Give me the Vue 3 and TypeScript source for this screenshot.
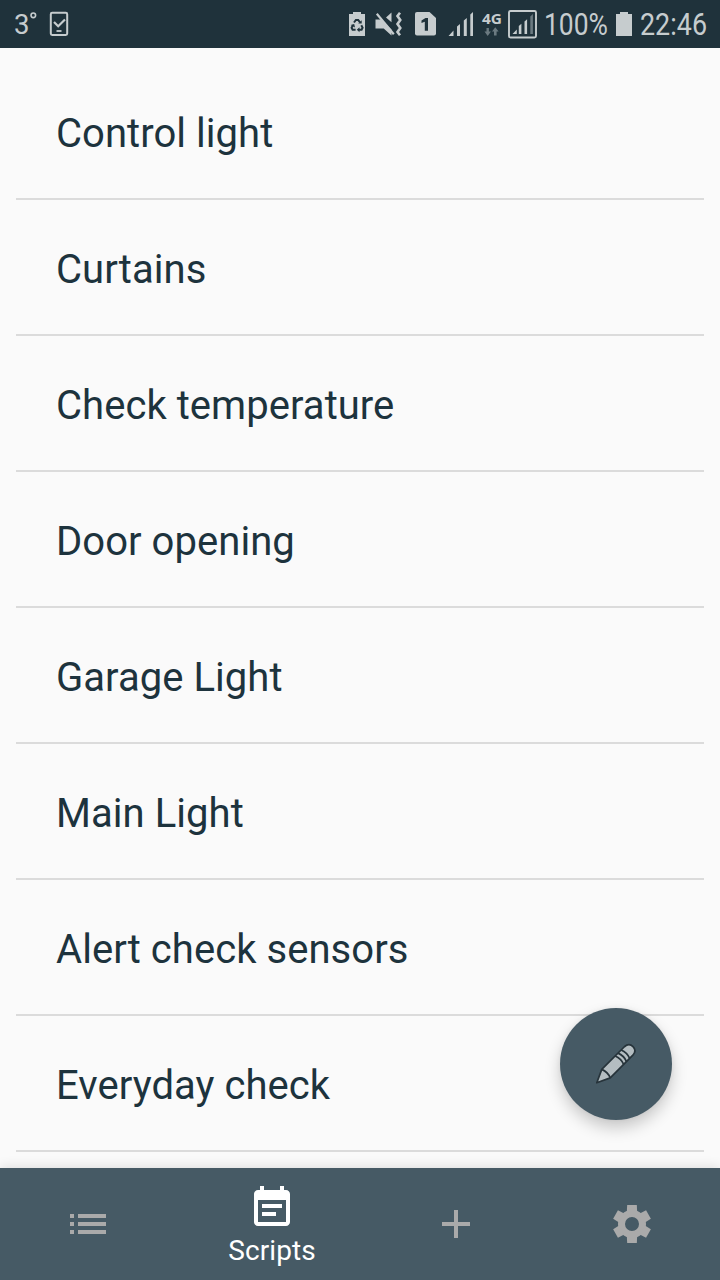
<script setup lang="ts">
interface Script {
  id: number
  name: string
}

const scripts: Script[] = [
  'Control light',
  'Curtains',
  'Check temperature',
  'Door opening',
  'Garage Light',
  'Main Light',
  'Alert check sensors',
  'Everyday check',
].map((name, id) => ({ id, name }))

const gearTeeth: number[] = [0, 60, 120, 180, 240, 300]
</script>

<template>
  <div class="screen">
    <header class="status">
      <div class="status-group">
        <svg width="42" height="48" viewBox="0 0 42 48">
          <text x="14" y="34" font-size="28" textLength="15.5" lengthAdjust="spacingAndGlyphs">3</text>
          <circle cx="33.300" cy="15.300" r="2.300" fill="none" stroke="#c6ccce" stroke-width="1.600" />
        </svg>
        <svg width="30" height="48" viewBox="42 0 30 48">
          <rect x="50.800" y="12.800" width="16.400" height="22.200" rx="1.400" fill="none" stroke="#c6ccce" stroke-width="2" />
          <path d="M54 22l4.200 4.200 6.800-6.700" fill="none" stroke="#c6ccce" stroke-width="2.200" />
          <path d="M56.500 31h5" stroke="#c6ccce" stroke-width="1.800" />
        </svg>
      </div>
      <div class="status-group">
        <svg width="26" height="48" viewBox="345 0 26 48">
          <path d="M349 14h4v-2h8v2h4v22h-16z" />
          <g fill="none" stroke="#1f323b" stroke-width="2">
            <path d="M354 22.500l1.900-2.600h2.300l1.800 2.400M361.300 25.200l1.300 2.600-1 1.900h-3M355.600 29.700h-3l-1-1.900 1.400-2.600" />
          </g>
          <path d="M358.200 23.600h3.500v-3.400zM359.500 27.200v5l-2.700-2.500zM350.600 25l3.600-1 .8 3.500z" fill="#1f323b" />
        </svg>
        <svg width="38" height="48" viewBox="371 0 38 48">
          <path d="M375.500 19.500h5.500l10.500 10v6l-7.800-7h-8.200zM386 17.500l5.500-5v9.800z" />
          <path d="M376.800 13.800l17 20.500" stroke="#c6ccce" stroke-width="2.200" />
          <path d="M379.300 13l12.500 14.500" stroke="#1f323b" stroke-width="1.500" />
          <path d="M400 12.800l-2.500 3.200 2.800 4-2.800 4 2.800 4-2.800 4 2.500 3.200" fill="none" stroke="#c6ccce" stroke-width="2.600" />
        </svg>
        <svg width="34" height="48" viewBox="409 0 34 48">
          <path d="M417 12h12.500l6.500 6v15.500a2 2 0 0 1-2 2h-17a2 2 0 0 1-2-2v-19.500a2 2 0 0 1 2-2z" />
          <path d="M421.500 20.500l4-2.500h2.500v12.800h-3.200v-9l-3.300 1.200z" fill="#1f323b" />
        </svg>
        <svg width="36" height="48" viewBox="443 0 36 48">
          <path d="M448.500 36l5-5.500v5.500zM457 26.500l3-2.500v12h-3zM463.800 20.500l3-2.500v18h-3zM470.300 14.500l2.700-2.500v24h-2.700z" />
        </svg>
        <svg width="27" height="48" viewBox="479 0 27 48">
          <text class="network" x="482" y="24" font-size="15" textLength="20" lengthAdjust="spacingAndGlyphs">4G</text>
          <path d="M486.500 28h2.400v3.500h2l-3.200 4.500-3.200-4.500h2zM494 35.500v-4h-2l3.300-4.300 3.300 4.300h-2v4z" fill="#6b7a81" />
        </svg>
        <svg width="36" height="48" viewBox="506 0 36 48">
          <rect x="509" y="11" width="27" height="26.500" rx="1.500" fill="none" stroke="#c6ccce" stroke-width="1.900" />
          <path d="M512.500 34l4.300-4.500v4.500zM518.800 26l2.600-2.200v10.200h-2.600zM524.500 21.500l2.600-2.200v14.700h-2.600z" />
          <path d="M530.300 16.500l2.600-2.500v20h-2.600z" fill="#6b7a81" />
        </svg>
        <svg width="70" height="48" viewBox="542 0 70 48">
          <text x="544" y="35" font-size="30.500" textLength="64" lengthAdjust="spacingAndGlyphs">100%</text>
        </svg>
        <svg width="24" height="48" viewBox="612 0 24 48">
          <path d="M616 14h4v-2h8v2h4v22h-16z" />
        </svg>
        <svg width="84" height="48" viewBox="636 0 84 48">
          <text x="640" y="35" font-size="30.500" textLength="67" lengthAdjust="spacingAndGlyphs">22:46</text>
        </svg>
      </div>
    </header>

    <main class="content">
      <ul class="scripts">
        <li v-for="script in scripts" :key="script.id" class="script">{{ script.name }}</li>
      </ul>
    </main>

    <button class="fab" aria-label="Edit">
      <svg width="48" height="48" viewBox="592 1040 48 48">
        <g transform="translate(596.800 1082.800) rotate(-45)" fill="#b4bdc1" stroke="#27343b" stroke-width="1.700" stroke-linejoin="round">
          <path d="M0 0L13 -6H45Q51.200 -5.600 51.200 0T45 6H13Z" />
          <path d="M13 -6Q15.500 0 13 6M32 -6Q34.500 0 32 6M36 -6Q38.500 0 36 6M40.500 -6Q43 0 40.500 6" fill="none" />
        </g>
      </svg>
    </button>

    <nav class="tabs">
      <a class="tab">
        <svg width="48" height="48" viewBox="0 0 24 24">
          <path d="M3 13h2v-2H3v2zm0 4h2v-2H3v2zm0-8h2V7H3v2zm4 4h14v-2H7v2zm0 4h14v-2H7v2zM7 7v2h14V7H7z" />
        </svg>
      </a>
      <a class="tab tab-active">
        <svg width="48" height="48" viewBox="0 0 24 24">
          <path d="M17 10H7v2h10v-2zm2-7h-1V1h-2v2H8V1H6v2H5c-1.110 0-1.990.9-1.990 2L3 19c0 1.100.89 2 2 2h14c1.100 0 2-.9 2-2V5c0-1.100-.9-2-2-2zm0 16H5V8h14v11zm-5-5H7v2h7v-2z" />
        </svg>
        <span>Scripts</span>
      </a>
      <a class="tab">
        <svg width="48" height="48" viewBox="0 0 24 24">
          <path d="M19 13h-6v6h-2v-6H5v-2h6V5h2v6h6v2z" />
        </svg>
      </a>
      <a class="tab">
        <svg width="48" height="48" viewBox="-24 -24 48 48">
          <circle r="10.500" fill="none" stroke="#aaaaaa" stroke-width="7" />
          <path v-for="angle in gearTeeth" :key="angle" d="M-4.800 -19H4.800L5.200 -12H-5.200Z" :transform="`rotate(${angle})`" />
        </svg>
      </a>
    </nav>
  </div>
</template>

<style scoped>
.screen {
  position: relative;
  display: flex;
  flex-direction: column;
  width: 720px;
  height: 1280px;
  overflow: hidden;
  background: #fafafa;
  font-family: Roboto, "Liberation Sans", sans-serif;
}

svg {
  display: block;
  flex: none;
  overflow: visible;
}

.status {
  display: flex;
  justify-content: space-between;
  flex: none;
  height: 48px;
  background: #1f323b;
  fill: #c6ccce;
}

.status-group {
  display: flex;
}

.network {
  font-family: "Open Sans", "Noto Sans", sans-serif;
  font-weight: 700;
}

.content {
  flex: 1;
  padding: 16px 16px 0;
}

.scripts {
  margin: 0;
  padding: 0;
  list-style: none;
}

.script {
  box-sizing: border-box;
  height: 136px;
  padding: 0 40px;
  border-bottom: 2px solid #dbdbdb;
  color: #1d333d;
  font-size: 40px;
  line-height: 140px;
  letter-spacing: 0.05px;
  white-space: nowrap;
}

.fab {
  position: absolute;
  right: 48px;
  bottom: 160px;
  display: flex;
  align-items: center;
  justify-content: center;
  width: 112px;
  height: 112px;
  padding: 0;
  border: 0;
  border-radius: 50%;
  background: #465a65;
  box-shadow: 0 8px 16px rgba(0, 0, 0, 0.2), 0 0 5px rgba(0, 0, 0, 0.06);
}

.tabs {
  display: grid;
  grid-template-columns: 176px 192px 176px 176px;
  flex: none;
  height: 112px;
  background: #465a65;
  box-shadow: 0 0 12px rgba(0, 0, 0, 0.14);
  fill: #aaaaaa;
}

.tab {
  display: flex;
  flex-direction: column;
  align-items: center;
  justify-content: center;
}

.tab-active {
  justify-content: flex-start;
  padding-top: 16px;
  color: #fff;
  font-size: 28px;
  letter-spacing: 0.1px;
  line-height: 38px;
  fill: #fff;
}
</style>
